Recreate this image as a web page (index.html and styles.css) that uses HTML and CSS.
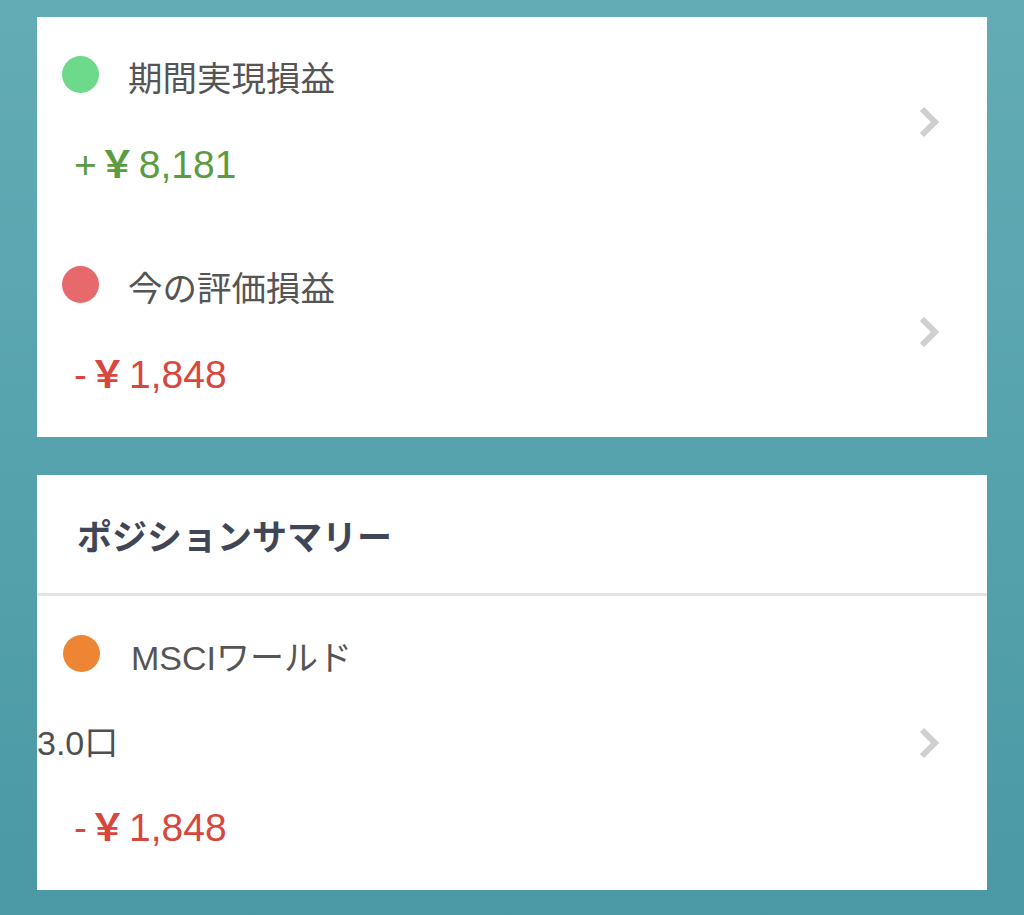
FILE: index.html
```html
<!DOCTYPE html>
<html lang="ja">
<head>
<meta charset="utf-8">
<link rel="stylesheet" href="styles.css">
</head>
<body>
<div class="page">
  <section class="card">
    <div class="row">
      <div class="row-body">
        <div class="label-line">
          <span class="dot dot-green"></span>
          <span class="label">期間実現損益</span>
        </div>
        <div class="value value-pos">+<span class="yen">￥</span>8,181</div>
      </div>
      <svg class="chev" width="22" height="32" viewBox="0 0 22 32"><polyline points="4,3 17,16 4,29" fill="none" stroke="#cfcfcf" stroke-width="6"/></svg>
    </div>
    <div class="row">
      <div class="row-body">
        <div class="label-line">
          <span class="dot dot-red"></span>
          <span class="label">今の評価損益</span>
        </div>
        <div class="value value-neg">-<span class="yen">￥</span>1,848</div>
      </div>
      <svg class="chev" width="22" height="32" viewBox="0 0 22 32"><polyline points="4,3 17,16 4,29" fill="none" stroke="#cfcfcf" stroke-width="6"/></svg>
    </div>
  </section>

  <section class="card">
    <header class="card-head">ポジションサマリー</header>
    <div class="row">
      <div class="row-body">
        <div class="label-line">
          <span class="dot dot-orange"></span>
          <span class="label">MSCIワールド</span>
        </div>
        <div class="qty">3.0口</div>
        <div class="value value-neg">-<span class="yen">￥</span>1,848</div>
      </div>
      <svg class="chev" width="22" height="32" viewBox="0 0 22 32"><polyline points="4,3 17,16 4,29" fill="none" stroke="#cfcfcf" stroke-width="6"/></svg>
    </div>
  </section>
</div>
</body>
</html>
```

FILE: styles.css
```css
html, body {
  margin: 0;
  padding: 0;
}
body {
  width: 1024px;
  height: 915px;
  background: linear-gradient(to bottom, #63acb6 0%, #4a99a4 100%);
  font-family: "Liberation Sans", "Noto Sans CJK JP", sans-serif;
  overflow: hidden;
}
.page {
  display: flex;
  flex-direction: column;
  gap: 38px;
  padding: 17px 37px 25px;
}
.card {
  background: #ffffff;
  display: flex;
  flex-direction: column;
}
.row {
  display: flex;
  align-items: center;
  height: 210px;
  box-sizing: border-box;
}
.card-head + .row {
  height: 294px;
}
.row-body {
  flex: 1;
  display: flex;
  flex-direction: column;
}
.label-line {
  display: flex;
  align-items: flex-start;
  height: 44px;
  padding-left: 25px;
}
.dot {
  width: 37px;
  height: 37px;
  border-radius: 50%;
  flex: none;
  margin-top: -1px;
}
.dot-green { background: #6cd98b; }
.dot-red { background: #e8696b; }
.dot-orange { background: #ee8535; margin-left: 1px; }
.label {
  margin-left: 29px;
  font-size: 34.5px;
  line-height: 44px;
  color: #555555;
}
.dot-orange + .label { margin-left: 31px; font-size: 34px; }
.value {
  margin-top: 42px;
  padding-left: 37px;
  font-size: 39px;
  line-height: 44px;
}
.yen {
  font-weight: bold;
  font-size: 37px;
  margin: 0 3px 0 2px;
}
.value-pos { color: #5b9b41; }
.value-neg { color: #d8473e; }
.qty {
  margin-top: 41px;
  font-size: 34px;
  line-height: 44px;
  color: #4f4f4f;
}
.qty + .value { margin-top: 41px; }
.chev {
  flex: none;
  margin-right: 47px;
}
.card-head {
  display: flex;
  align-items: center;
  padding-left: 40px;
  font-size: 35px;
  font-weight: bold;
  color: #414656;
  border-bottom: 3px solid #e3e3e3;
  box-sizing: border-box;
  height: 121px;
}
```
